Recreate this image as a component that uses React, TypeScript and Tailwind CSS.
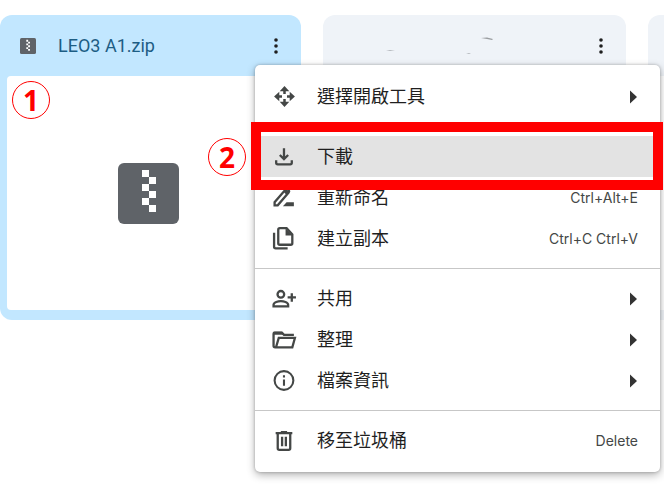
import React from "react";
import clsx from "clsx";

interface IconProps {
    className?: string
}

const OpenWithIcon: React.FC<IconProps> = ({ className }) => (
    <svg viewBox="0 0 24 24" className={className} fill="none" stroke="currentColor" strokeWidth={2.4}>
        <path d="M12 9.600V5M12 14.400v4.600M9.600 12H5M14.400 12H19" />
        <path d="M12 2l4.600 5H7.400zM12 22l4.600-5H7.400zM2 12l5-4.600v9.200zM22 12l-5-4.600v9.200z" fill="currentColor" stroke="none" />
    </svg>
)

const DownloadIcon: React.FC<IconProps> = ({ className }) => (
    <svg viewBox="0 0 24 24" className={className} fill="none" stroke="currentColor" strokeWidth={2.2}>
        <path d="M11.500 4v10.500M7.500 10.500l4 4 4-4" />
        <path d="M4 15.500V18q0 1.500 1.500 1.500h12q1.500 0 1.500-1.500v-2.500" />
    </svg>
)

const RenameIcon: React.FC<IconProps> = ({ className }) => (
    <svg viewBox="0 0 24 24" className={className} fill="none" stroke="currentColor" strokeWidth={2.2}>
        <path d="M2.500 19.500v-3L13 4.300q1.200-1 2.400 0l.6.6q1 1.200 0 2.400L5.500 19.500z" />
        <path d="M11 6.500l3 3 2.500-3-3-3z" fill="currentColor" stroke="none" />
        <path d="M14 16.500h7v4H10.500z" fill="currentColor" stroke="none" />
    </svg>
)

const CopyIcon: React.FC<IconProps> = ({ className }) => (
    <svg viewBox="0 0 24 24" className={className} fill="none" stroke="currentColor" strokeWidth={2.2}>
        <path d="M7.500 2H14l5.500 6v8.500q0 1.500-1.500 1.500H7.500Q6 18 6 16.500v-13Q6 2 7.500 2z" />
        <path d="M13 2v7h7z" fill="currentColor" stroke="none" />
        <path d="M2 6.500v13.500Q2 21.500 3.500 21.500H15" />
    </svg>
)

const ShareIcon: React.FC<IconProps> = ({ className }) => (
    <svg viewBox="0 0 24 24" className={className} fill="none" stroke="currentColor" strokeWidth={2.2}>
        <circle cx="8.500" cy="8" r="3.200" />
        <path d="M1.500 19.500v-1.500C1.500 15.500 6 14.500 8.500 14.500s7 1 7 3.500v1.500zM19 7v8M15 11h8" />
    </svg>
)

const FolderIcon: React.FC<IconProps> = ({ className }) => (
    <svg viewBox="0 0 24 24" className={className} fill="none" stroke="currentColor" strokeWidth={2.2}>
        <path d="M21 7.500H11.500l-2-2H2.500q-1 0-1 1v11.500q0 1.500 1.500 1.500H19.500L22 10.500H6.500L4 19" />
        <path d="M1.500 4.500h8l3 3h-11z" fill="currentColor" stroke="none" />
    </svg>
)

const InfoIcon: React.FC<IconProps> = ({ className }) => (
    <svg viewBox="0 0 24 24" className={className} fill="none" stroke="currentColor" strokeWidth={2}>
        <circle cx="11.500" cy="12" r="9" />
        <path d="M11.500 11v6M11.500 7v2" />
    </svg>
)

const TrashIcon: React.FC<IconProps> = ({ className }) => (
    <svg viewBox="0 0 24 24" className={className} fill="none" stroke="currentColor" strokeWidth={2.2}>
        <path d="M3.500 5h16M8.500 4h6M5.500 5V19.500q0 1.500 1.500 1.500h9q1.500 0 1.500-1.500V5M9.700 8.500v9M13.300 8.500v9" />
    </svg>
)

const ZipIcon: React.FC<IconProps> = ({ className }) => (
    <svg viewBox="0 0 61 61" className={className}>
        <rect width="61" height="61" rx="6" fill="#5f6368" />
        <path d="M24 7h7v7h7v7h-7v7h7v7h-7v7h7v7h-7v-7h-7v-7h7v-7h-7v-7h7v-7h-7z" fill="#fff" />
    </svg>
)

const MoreButton: React.FC<{ label: string }> = ({ label }) => (
    <button type="button" aria-label={label} className="flex h-6 w-6 items-center justify-center text-[#1f1f1f]">
        <svg viewBox="0 0 24 24" className="h-6 w-6" fill="currentColor">
            <circle cx="12" cy="6" r="1.8" />
            <circle cx="12" cy="12" r="1.8" />
            <circle cx="12" cy="18" r="1.8" />
        </svg>
    </button>
)

interface MenuItem {
    label: string
    icon: React.FC<IconProps>
    shortcut?: string
    submenu?: boolean
    active?: boolean
}

const groups: MenuItem[][] = [
    [{ label: "選擇開啟工具", icon: OpenWithIcon, submenu: true }],
    [
        { label: "下載", icon: DownloadIcon, active: true },
        { label: "重新命名", icon: RenameIcon, shortcut: "Ctrl+Alt+E" },
        { label: "建立副本", icon: CopyIcon, shortcut: "Ctrl+C Ctrl+V" },
    ],
    [
        { label: "共用", icon: ShareIcon, submenu: true },
        { label: "整理", icon: FolderIcon, submenu: true },
        { label: "檔案資訊", icon: InfoIcon, submenu: true },
    ],
    [{ label: "移至垃圾桶", icon: TrashIcon, shortcut: "Delete" }],
]

const StepBadge: React.FC<{ step: number, className?: string }> = ({ step, className }) => (
    <span className={clsx("absolute flex h-[38px] w-[38px] items-center justify-center rounded-full border border-[#ff0000] bg-white font-['Noto_Sans',sans-serif] text-[28px] leading-none font-bold text-[#ff0000]", className)}>
        {step}
    </span>
)

const MenuRow: React.FC<{ item: MenuItem }> = ({ item }) => {
    const Icon = item.icon

    return (
        <li className="relative">
            <button
                type="button"
                className={clsx("flex h-[41px] w-full items-center pr-[22px] pl-[17px] text-left", item.active && "bg-[#e3e3e3]")}
            >
                <Icon className="h-[25px] w-[25px] shrink-0 text-[#444746]" />
                <span className="ml-5 flex-1 text-lg leading-6 text-[#1f1f1f]">{item.label}</span>
                {item.shortcut && <span className="font-[Inter,sans-serif] text-sm text-[#444746]">{item.shortcut}</span>}
                {item.submenu && (
                    <svg viewBox="0 0 9 14" className="h-[14px] w-[9px]" fill="#333333">
                        <path d="M1 0.500l7 6.500-7 6.500z" />
                    </svg>
                )}
            </button>
            {item.active && (
                <>
                    {/* callout frame around the highlighted row */}
                    <span className="pointer-events-none absolute -top-[14px] -right-[3px] -bottom-[13px] -left-1 z-10 border-[10px] border-[#ff0000]" />
                    <StepBadge step={2} className="top-[2px] -left-[47px]" />
                </>
            )}
        </li>
    )
}

const App: React.FC = () => {
    return (
        <main className="relative min-h-screen overflow-hidden bg-white pt-[15px] font-[Roboto,'Noto_Sans_CJK_TC',sans-serif]">
            <div className="flex gap-[22px]">
                <article className="relative flex h-[305px] w-[301px] shrink-0 flex-col rounded-xl bg-[#c2e7ff] pr-[11px] pb-[10px] pl-[7px]">
                    <header className="flex h-[61px] shrink-0 items-center pr-[2px] pl-[13px]">
                        <ZipIcon className="h-4 w-4" />
                        <h2 className="ml-[22px] flex-1 text-lg text-[#1d5d84]">LEO3 A1.zip</h2>
                        <MoreButton label="LEO3 A1.zip" />
                    </header>
                    <div className="flex flex-1 items-center justify-center rounded bg-white">
                        <ZipIcon className="h-[61px] w-[61px]" />
                    </div>
                    <StepBadge step={1} className="top-[66px] left-3" />
                </article>
                <article className="flex h-[305px] w-[303px] shrink-0 flex-col rounded-xl bg-[#eff3f8] px-[7px] pb-[10px]">
                    <header className="flex h-[61px] shrink-0 items-center justify-between pr-[6px] pl-6">
                        <svg viewBox="0 0 142 24" className="h-6 w-[142px]" fill="none">
                            <path d="M32 16.500l4-.6 5 .6-5 .5zM112 19.500l3-.5 2 .5-2 .5z" fill="#b4b8bc" />
                            <path d="M127 4l6-.5 6 1.500-1 1-5-1z" fill="#9a9da0" />
                        </svg>
                        <MoreButton label="more" />
                    </header>
                    <div className="flex-1 rounded bg-white" />
                </article>
                <article className="h-[305px] w-[303px] shrink-0 rounded-xl bg-[#eff3f8] px-[7px] pt-[61px] pb-[10px]">
                    <div className="h-full rounded bg-white" />
                </article>
            </div>

            <nav className="absolute top-[65px] right-1 left-[255px] rounded-[5px] bg-white py-[11px] shadow-[0_3px_8px_rgba(0,0,0,0.3),0_0_3px_rgba(0,0,0,0.25)]">
                {groups.map((items, index) => (
                    <React.Fragment key={index}>
                        {index > 0 && <hr className="my-[9px] h-px border-0 bg-[#c7c7c7]" />}
                        <ul>
                            {items.map((item) => <MenuRow key={item.label} item={item} />)}
                        </ul>
                    </React.Fragment>
                ))}
            </nav>
        </main>
    )
}

export default App;
